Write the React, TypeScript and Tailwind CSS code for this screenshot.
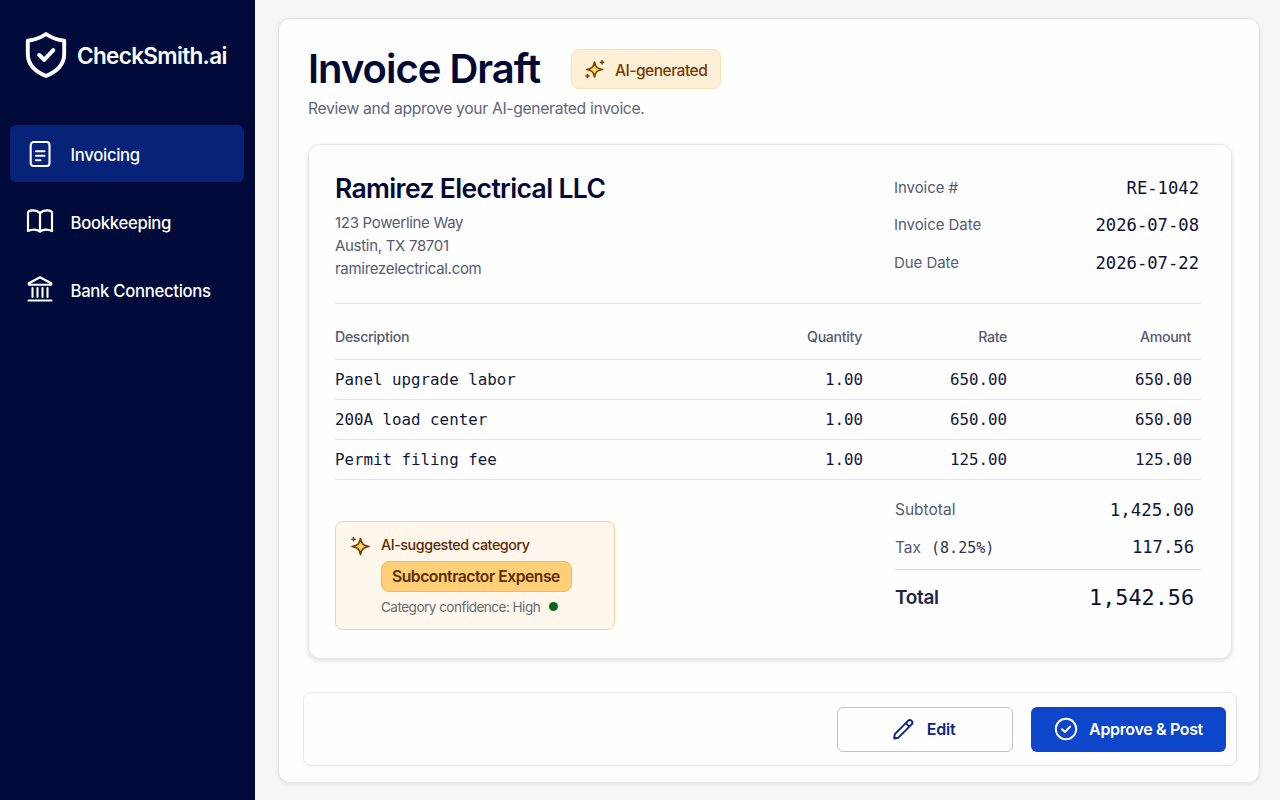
import type { ReactNode } from 'react'

const mono = "font-['DejaVu_Sans_Mono',monospace]"

const items = [
  { name: 'Panel upgrade labor', qty: '1.00', rate: '650.00', amount: '650.00' },
  { name: '200A load center', qty: '1.00', rate: '650.00', amount: '650.00' },
  { name: 'Permit filing fee', qty: '1.00', rate: '125.00', amount: '125.00' },
]

function ShieldIcon() {
  return (
    <svg className="h-[48px] w-[42px]" viewBox="0 0 42 48" fill="none" stroke="currentColor" strokeLinecap="round" strokeLinejoin="round">
      <path d="M21 3C16 6.500 9.500 9 2.800 9.800V23C2.800 33.500 10 40.500 21 45C32 40.500 39.200 33.500 39.200 23V9.800C32.500 9 26 6.500 21 3Z" strokeWidth="3.900" />
      <path d="M14.200 24L19.200 28.800L28.300 19.200" strokeWidth="4" />
    </svg>
  )
}

function DocumentIcon() {
  return (
    <svg className="h-7 w-7" viewBox="0 0 28 28" fill="none" stroke="currentColor" strokeWidth="2.100" strokeLinecap="round" strokeLinejoin="round">
      <rect x="4.700" y="2" width="18.800" height="24" rx="3" />
      <path d="M10 11.200H18.500M10 15.800H18.500M10 20.200H14.500" />
    </svg>
  )
}

function BookIcon() {
  return (
    <svg className="h-7 w-7" viewBox="0 0 28 28" fill="none" stroke="currentColor" strokeWidth="2.200" strokeLinecap="round" strokeLinejoin="round">
      <path d="M14 5.200C12 3 9.500 2.400 6.500 2.400C4 2.400 2 3.200 2 5.200V23C6 21.200 11 21.200 14 23.700C17 21.200 22 21.200 26 23V5.200C26 3.200 24 2.400 21.500 2.400C18.500 2.400 16 3 14 5.200ZM14 5.200V23.500" />
    </svg>
  )
}

function BankIcon() {
  return (
    <svg className="h-7 w-7" viewBox="0 0 28 28" fill="none" stroke="currentColor" strokeWidth="2.100" strokeLinecap="round" strokeLinejoin="round">
      <path d="M14 1.200L2.800 7.200V8.700H25.200V7.200L14 1.200ZM2.500 24.500H25.500" />
      <path d="M6.500 12V21M11.500 12V21M16.500 12V21M21.500 12V21" />
    </svg>
  )
}

function SparkleIcon() {
  return (
    <svg className="h-5 w-5 overflow-visible" viewBox="0 0 20 20" fill="none" stroke="#7c4300" strokeLinecap="round" strokeLinejoin="round">
      <path d="M9.500 3C10.500 8 12 9.500 17.500 10.500C12 11.500 10.500 13 9.500 18C8.500 13 7 11.500 1.500 10.500C7 9.500 8.500 8 9.500 3Z" fill="#ffd36b" strokeWidth="1.700" />
      <path d="M17 1.800V4.800M15.500 3.300H18.500M2.500 15.500V18.500M1 17H4" strokeWidth="1.700" />
    </svg>
  )
}

function SuggestionIcon() {
  return (
    <svg className="h-5 w-5 overflow-visible" viewBox="0 0 20 20" fill="none" stroke="#7c4300" strokeLinecap="round" strokeLinejoin="round">
      <path d="M10.500 2.500C11.500 7.700 13 9.500 19 10.500C13 11.500 11.500 13.200 10.500 18.500C9.500 13.200 8 11.500 2 10.500C8 9.500 9.500 7.700 10.500 2.500Z" fill="#ffd36b" strokeWidth="1.700" />
      <path d="M3.500 1.500V4.800M1.800 3.200H5.200" strokeWidth="1.600" />
    </svg>
  )
}

function PencilIcon() {
  return (
    <svg className="h-6 w-6" viewBox="0 0 24 24" fill="none" stroke="currentColor" strokeWidth="1.900" strokeLinecap="round" strokeLinejoin="round">
      <path d="M3.200 21.500L3.800 17.100L17.100 3.800C18.100 2.800 19.600 2.800 20.600 3.800C21.600 4.800 21.600 6.400 20.600 7.400L7.400 20.700L3.200 21.500ZM14.800 6.100L18.400 9.700" />
    </svg>
  )
}

function CheckCircleIcon() {
  return (
    <svg className="h-6 w-6" viewBox="0 0 24 24" fill="none" stroke="currentColor" strokeWidth="1.900" strokeLinecap="round" strokeLinejoin="round">
      <circle cx="12" cy="12" r="10.200" />
      <path d="M8 12.200L10.900 15L16.200 9.500" />
    </svg>
  )
}

function NavItem({ icon, label, active }: { icon: ReactNode; label: string; active?: boolean }) {
  return (
    <a
      className={`flex h-[57px] items-center gap-[16.500px] rounded-md pl-4 text-[16.700px] font-medium text-white ${
        active ? 'bg-[#062279]' : ''
      }`}
    >
      {icon}
      <span className="pt-1 tracking-[-0.3px]">{label}</span>
    </a>
  )
}

function Sidebar() {
  return (
    <aside className="flex w-[255px] shrink-0 flex-col bg-[#000b3c] px-[10px] text-white">
      <div className="flex items-center gap-[10px] pt-[31px] pl-[15px]">
        <ShieldIcon />
        <span className="pt-[2px] text-[22.500px] font-semibold tracking-[-0.65px]">CheckSmith.ai</span>
      </div>
      <nav className="mt-[46px] flex w-[234px] flex-col gap-[11px]">
        <NavItem icon={<DocumentIcon />} label="Invoicing" active />
        <NavItem icon={<BookIcon />} label="Bookkeeping" />
        <NavItem icon={<BankIcon />} label="Bank Connections" />
      </nav>
    </aside>
  )
}

function MetaRow({ label, value }: { label: string; value: string }) {
  return (
    <div className="flex h-[37.500px] items-center justify-between">
      <span className="text-[15px] tracking-[-0.05px] text-[#555b70]">{label}</span>
      <span className={`${mono} pt-[2px] text-[17.200px] text-[#0b1235]`}>{value}</span>
    </div>
  )
}

function InvoiceCard() {
  return (
    <section className="flex h-[515px] flex-col rounded-xl border border-[#e5e7ee] bg-[#fefefe] pr-[30px] pl-[26px] shadow-[0_2px_5px_rgba(0,0,0,0.13)]">
      <div className="flex h-[159px] shrink-0 justify-between border-b border-[#e2e4ec]">
        <div className="pt-[25px]">
          <h2 className="text-[26.500px] leading-9 font-semibold tracking-[-0.640px] text-[#000a35]">Ramirez Electrical LLC</h2>
          <address className="mt-[5px] text-[15px] leading-[23px] tracking-[-0.3px] text-[#555b6f] not-italic">
            123 Powerline Way
            <br />
            Austin, TX 78701
            <br />
            ramirezelectrical.com
          </address>
        </div>
        <div className="w-[307px] pt-6 pr-[2px]">
          <MetaRow label="Invoice #" value="RE-1042" />
          <MetaRow label="Invoice Date" value="2026-07-08" />
          <MetaRow label="Due Date" value="2026-07-22" />
        </div>
      </div>

      <table className="w-full shrink-0 table-fixed">
        <colgroup>
          <col className="w-[383px]" />
          <col className="w-[145px]" />
          <col className="w-[144px]" />
          <col />
        </colgroup>
        <thead>
          <tr className="h-[55px] border-b border-[#e2e4ec] text-[14.200px] tracking-[-0.35px] text-[#555b70] [&>th]:pt-[10px] [&>th]:font-medium">
            <th className="text-left">Description</th>
            <th className="pr-[1px] text-right">Quantity</th>
            <th className="text-right">Rate</th>
            <th className="pr-[10px] text-right">Amount</th>
          </tr>
        </thead>
        <tbody className={`${mono} text-[15.800px] text-[#10183a]`}>
          {items.map((item) => (
            <tr key={item.name} className="h-10 border-b border-[#e2e4ec] [&>td]:pt-[2px]">
              <td>{item.name}</td>
              <td className="text-right">{item.qty}</td>
              <td className="text-right">{item.rate}</td>
              <td className="pr-[9px] text-right">{item.amount}</td>
            </tr>
          ))}
        </tbody>
      </table>

      <div className="flex justify-between">
        <div className="mt-[41px] flex h-[109px] w-[280px] gap-[11px] rounded-lg border border-[#fbd28a] bg-[#fff7ec] pt-3 pl-[14px]">
          <div className="mt-[2px]">
            <SuggestionIcon />
          </div>
          <div className="flex flex-col items-start">
            <span className="text-[14.300px] leading-[22px] font-medium tracking-[-0.43px] text-[#5c2a00]">
              AI-suggested category
            </span>
            <span className="mt-[5px] flex h-[31px] w-[191px] items-center rounded-lg border border-[#fbb849] bg-[#ffcf78] pt-[2px] pl-[10px] text-[15.700px] font-semibold tracking-[-0.47px] whitespace-nowrap text-[#5c2d00]">
              Subcontractor Expense
            </span>
            <span className="mt-1 flex items-center gap-[9px] text-[13.500px] leading-[22px] tracking-[-0.5px] text-[#666a73]">
              Category confidence: High
              <i className="h-[9px] w-[9px] rounded-full bg-[#056821]" />
            </span>
          </div>
        </div>

        <div className="w-[306px] pt-3">
          <div className="flex h-[37px] items-center justify-between pr-[7px]">
            <span className="text-[15.500px] text-[#555b70]">Subtotal</span>
            <span className={`${mono} text-[17.500px] text-[#10183a]`}>1,425.00</span>
          </div>
          <div className="flex h-[38px] items-center justify-between pr-[7px]">
            <span className="text-[15.500px] text-[#555b70]">
              Tax<span className={`${mono} ml-[10px] text-[15px] text-[#30364f]`}>(8.25%)</span>
            </span>
            <span className={`${mono} text-[17.200px] text-[#10183a]`}>117.56</span>
          </div>
          <div className="mt-[2px] flex h-[56px] items-center justify-between border-t border-[#d3d7e2] pt-[2px] pr-[7px]">
            <span className="text-[19px] font-semibold tracking-[-0.35px] text-[#20263f]">Total</span>
            <span className={`${mono} text-[21.800px] text-[#08102f]`}>1,542.56</span>
          </div>
        </div>
      </div>
    </section>
  )
}

export default function App() {
  return (
    <div className="flex h-[800px] w-[1280px] overflow-hidden bg-[#f6f6f7] font-[Inter,sans-serif]">
      <Sidebar />
      <main className="mt-[18px] ml-[23px] h-[765px] w-[982px] rounded-xl border border-[#e4e5e8] bg-[#fefefe] pt-[25px] pr-[22px] pl-6 shadow-[0_1px_4px_rgba(0,0,0,0.08)]">
        <header className="h-[100px] pl-[5px]">
          <div className="flex h-[50px] items-center gap-[31px]">
            <h1 className="text-[40px] leading-[46px] font-semibold tracking-[-1px] text-[#000a35]">Invoice Draft</h1>
            <span className="flex h-10 w-[150px] items-center gap-[10px] rounded-lg border border-[#fde0ac] bg-[#feefd7] pl-[13px] text-[15.500px] font-medium tracking-[-0.48px] text-[#713b00]">
              <SparkleIcon />
              <span className="pt-[3px]">AI-generated</span>
            </span>
          </div>
          <p className="mt-[3px] text-[15.700px] leading-6 tracking-[-0.33px] text-[#60667a]">
            Review and approve your AI-generated invoice.
          </p>
        </header>
        <div className="mr-[5px] ml-[5px]">
          <InvoiceCard />
        </div>
        <footer className="mt-[33px] flex h-[74px] items-center justify-end gap-[18px] rounded-lg border border-[#e7e9ee] pr-[10px] shadow-[0_1px_3px_rgba(0,0,0,0.04)]">
          <button className="flex h-[45px] w-[176px] items-center justify-center gap-3 rounded-md border border-[#b3c2e5] pr-[4px] text-[16px] font-semibold tracking-[-0.2px] text-[#08248b]">
            <PencilIcon />
            <span>Edit</span>
          </button>
          <button className="flex h-[45px] w-[195px] items-center justify-center gap-[11px] rounded-md bg-[#0d46cb] text-[16px] font-semibold tracking-[-0.35px] text-white">
            <CheckCircleIcon />
            <span>Approve &amp; Post</span>
          </button>
        </footer>
      </main>
    </div>
  )
}
